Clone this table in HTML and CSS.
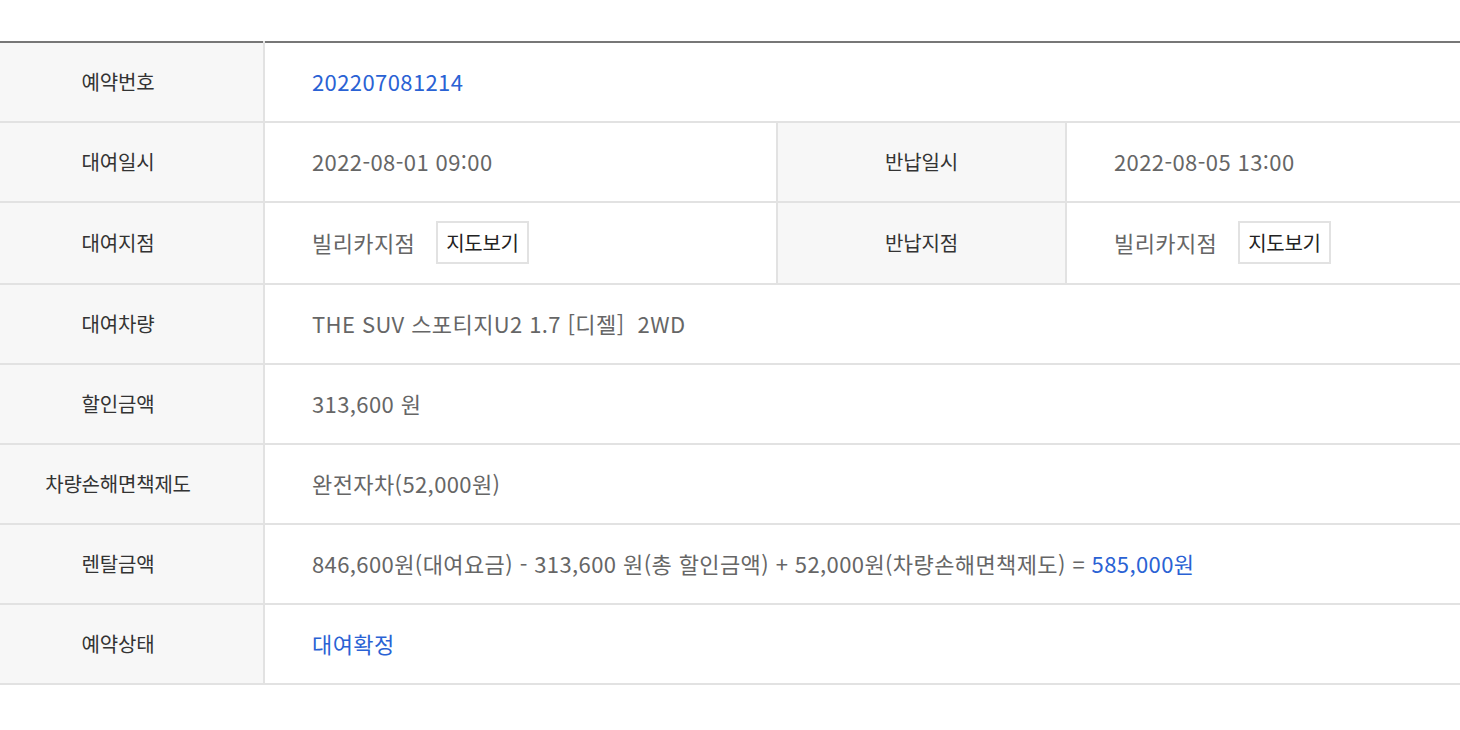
FILE: index.html
```html
<!DOCTYPE html>
<html lang="ko">
<head>
<meta charset="UTF-8" />
<title>예약확인</title>
<link rel="stylesheet" href="styles.css">
</head>
<body>
	<div class="wrap">
		<table class="resv">
			<colgroup>
				<col class="c-th">
				<col class="c-td">
				<col class="c-th2">
				<col>
			</colgroup>
			<tr>
				<th>예약번호</th>
				<td colspan="3" class="blue">202207081214</td>
			</tr>
			<tr>
				<th>대여일시</th>
				<td>2022-08-01 09:00</td>
				<th>반납일시</th>
				<td>2022-08-05 13:00</td>
			</tr>
			<tr class="tall">
				<th>대여지점</th>
				<td><div class="place"><span>빌리카지점</span><button class="btn-map">지도보기</button></div></td>
				<th>반납지점</th>
				<td><div class="place"><span>빌리카지점</span><button class="btn-map">지도보기</button></div></td>
			</tr>
			<tr>
				<th>대여차량</th>
				<td colspan="3">THE SUV 스포티지U2 1.7 [디젤]&nbsp; 2WD</td>
			</tr>
			<tr>
				<th>할인금액</th>
				<td colspan="3">313,600 원</td>
			</tr>
			<tr>
				<th>차량손해면책제도</th>
				<td colspan="3">완전자차(52,000원)</td>
			</tr>
			<tr>
				<th>렌탈금액</th>
				<td colspan="3">846,600원(대여요금) - 313,600 원(총 할인금액) + 52,000원(차량손해면책제도) = <span class="blue">585,000원</span></td>
			</tr>
			<tr>
				<th>예약상태</th>
				<td colspan="3" class="blue">대여확정</td>
			</tr>
		</table>
	</div>
</body>
</html>
```

FILE: styles.css
```css
* {
	margin: 0;
	padding: 0;
	box-sizing: border-box;
}

body {
	background: #fff;
	font-family: 'Noto Sans CJK KR', 'Noto Sans', sans-serif;
}

.wrap {
	padding-top: 41px;
}

.resv {
	width: 100%;
	border-collapse: collapse;
	table-layout: fixed;
	border-top: 2px solid #777;
}

.c-th { width: 264px; }
.c-td { width: 513px; }
.c-th2 { width: 289px; }

.resv tr {
	height: 80px;
}

.resv tr.tall {
	height: 82px;
}

.resv th,
.resv td {
	border: 2px solid #e2e2e2;
	border-top: none;
	vertical-align: middle;
	padding-bottom: 2px;
}

.resv th {
	background: #f7f7f7;
	color: #333;
	font-size: 20px;
	font-weight: 400;
	text-align: center;
	letter-spacing: -0.2px;
}

.resv th:first-child {
	border-left: none;
	padding-right: 27px;
}

.resv td {
	padding-left: 47px;
	color: #666;
	font-size: 22px;
	font-weight: 400;
	letter-spacing: 0.4px;
}

.resv td:last-child {
	border-right: none;
}

.blue,
.resv td.blue {
	color: #2a62d4;
}

.place {
	display: flex;
	align-items: center;
	gap: 21px;
}

.btn-map {
	height: 43px;
	padding: 0 8px;
	border: 2px solid #e2e2e2;
	background: #fff;
	color: #222;
	font-family: inherit;
	font-size: 20px;
	letter-spacing: -0.3px;
}
```
